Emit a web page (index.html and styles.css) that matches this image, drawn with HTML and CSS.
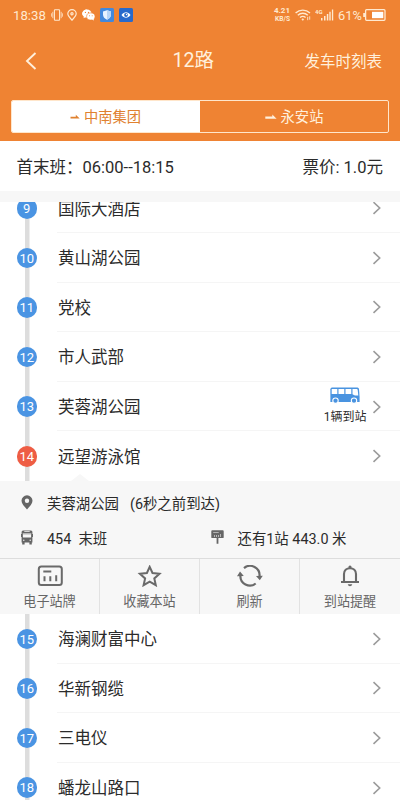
FILE: index.html
```
<!DOCTYPE html>
<html lang="zh-CN">
<head>
<meta charset="utf-8">
<title>12路</title>
<link rel="stylesheet" href="styles.css">
</head>
<body>
<svg class="defs" width="0" height="0">
  <symbol id="chev" viewBox="0 0 10 14"><path d="M1.5 1.2 7.7 7 1.5 12.8" fill="none" stroke="#9b9b9b" stroke-width="1.6"/></symbol>
</svg>
<div class="app">
  <header class="top">
    <div class="status">
      <span class="clock">18:38</span>
      <svg class="s-vib" width="12" height="12" viewBox="0 0 12 12" fill="none" stroke="#ffe9cf" stroke-width="1.1"><rect x="3.4" y=".8" width="5.2" height="10.4" rx=".7"/><path d="M1.8 2.8v6.4M10.2 2.8v6.4M.4 4.3v3.4M11.6 4.3v3.4" stroke-width=".8"/></svg>
      <svg class="s-pin" width="10" height="12" viewBox="0 0 10 12" fill="none" stroke="#ffe9cf" stroke-width="1.2"><path d="M5 11.2C2.6 8.6.8 6.7.8 4.8a4.2 4.2 0 0 1 8.4 0C9.2 6.700 7.400 8.600 5 11.200z"/><circle cx="5" cy="4.800" r="1.100"/></svg>
      <svg class="s-chat" width="13" height="12" viewBox="0 0 13 12"><path d="M5 .5C2.200.500.200 2.200.200 4.500c0 1.300.700 2.400 1.700 3.100L1.500 9.200l1.900-1 1.600.300z" fill="#fff"/><ellipse cx="5" cy="4.500" rx="4.600" ry="4" fill="#fff"/><ellipse cx="8.800" cy="7.500" rx="4.200" ry="3.600" fill="#fff" stroke="#ef8333" stroke-width=".6"/><path d="m10 10.500 1.900 1.100-.400-2z" fill="#fff"/><g fill="#ef8333"><circle cx="3.400" cy="3.400" r=".600"/><circle cx="6.500" cy="3.400" r=".600"/><circle cx="7.500" cy="6.700" r=".500"/><circle cx="10.200" cy="6.700" r=".500"/></g></svg>
      <svg class="s-shield" width="14" height="14" viewBox="0 0 14 14"><rect width="14" height="14" rx="1.500" fill="#4288dc"/><path d="M7 2.300 11 3.600v3.200c0 2.300-1.700 4-4 5-2.300-1-4-2.700-4-5V3.600z" fill="#e8f3ff"/><path d="M7 2.300 11 3.600v3.200c0 2.300-1.700 4-4 5z" fill="#b7d5f7"/></svg>
      <svg class="s-eye" width="14" height="14" viewBox="0 0 14 14"><rect width="14" height="14" rx="1.500" fill="#2869cc"/><path d="M2.500 7c2.500-3.700 6.500-3.700 9 0-2.500 3.700-6.500 3.700-9 0z" fill="#fff"/><circle cx="7" cy="7" r="1.900" fill="#2869cc"/><circle cx="7.500" cy="6.500" r=".7" fill="#fff"/></svg>
      <span class="speed"><b>4.21</b><b>KB/S</b></span>
      <svg class="s-wifi" width="16" height="12" viewBox="0 0 16 12" fill="none" stroke="#ffe9cf" stroke-width="1.400"><path d="M.6 4C4.700.100 10.900.100 15 4M2.800 6.300c2.900-2.700 7.100-2.700 10 0M5 8.600c1.700-1.500 3.900-1.500 5.600 0"/><circle cx="7.800" cy="10.500" r=".8" fill="#ffe9cf" stroke-width=".6"/><path d="M12.700 7.800v3.400M14.700 7.300v3.400" stroke-width=".9"/></svg>
      <svg class="s-sig" width="19" height="12" viewBox="0 0 19 12"><text x="0" y="5.300" class="g4">4G</text><g fill="#ffe9cf"><path d="M6 9h1.500v2.500H6zM9 7h1.500v4.500H9zM11.800 5h1.500v6.500h-1.500zM14.300 2.800h1.400v8.700h-1.400zM16.900.5h1.300v11h-1.300z"/></g></svg>
      <span class="pct">61%</span>
      <svg class="s-bat" width="23" height="12" viewBox="0 0 23 12"><rect x="2.600" y=".700" width="19.400" height="10.600" rx="1" fill="none" stroke="#ffe9cf" stroke-width="1.300"/><path d="M.2 4h1.800v4H.2z" fill="#ffe9cf"/><path d="M9 2.800h11.300v6.400H9z" fill="#fff"/></svg>
    </div>
    <div class="nav">
      <svg class="back" width="12" height="18" viewBox="0 0 12 18"><path d="M10.500 1 2 9l8.500 8" fill="none" stroke="#ffefdb" stroke-width="1.900"/></svg>
      <h1>12路</h1>
      <a class="sched">发车时刻表</a>
    </div>
    <div class="tabs">
      <div class="tab on"><svg width="10" height="6" viewBox="0 0 10 6"><path d="M.5 2.700h5.300V.7L9.700 4.400H.5z" fill="currentColor"/></svg><span>中南集团</span></div>
      <div class="tab"><svg width="12" height="6" viewBox="0 0 12 6"><path d="M.3 2.500h7V.4l4.300 4.300H.3z" fill="currentColor"/></svg><span>永安站</span></div>
    </div>
  </header>
  <div class="info"><span>首末班：06:00--18:15</span><span>票价: 1.0元</span></div>
  <main class="stops">
    <ul class="list before">
      <li><i>9</i><span>国际大酒店</span><svg class="chev"><use href="#chev"/></svg></li>
      <li><i>10</i><span>黄山湖公园</span><svg class="chev"><use href="#chev"/></svg></li>
      <li><i>11</i><span>党校</span><svg class="chev"><use href="#chev"/></svg></li>
      <li><i>12</i><span>市人武部</span><svg class="chev"><use href="#chev"/></svg></li>
      <li><i>13</i><span>芙蓉湖公园</span>
        <div class="bus">
          <svg width="30" height="17" viewBox="0 0 30 17"><path d="M2 .6h25.500q1.300 0 1.500 1.500l.6 7.900v5H.4V2.200Q.4.600 2 .6z" fill="#4993e0"/><path d="M1.700 2h5.600v5H1.700zM8.500 2h5.800v5H8.500zM15.500 2h5.800v5h-5.800zM22.500 2h4.300q.8 0 .9 1l.6 5.500h-3.300l-2.500-1.200z" fill="#fff"/><g fill="#4993e0" stroke="#fff" stroke-width="1.100"><circle cx="5.500" cy="13.700" r="2.700"/><circle cx="24" cy="13.700" r="2.700"/></g></svg>
          <em>1辆到站</em>
        </div>
        <svg class="chev"><use href="#chev"/></svg></li>
      <li class="cur"><i>14</i><span>远望游泳馆</span><svg class="chev"><use href="#chev"/></svg></li>
    </ul>
    <section class="panel">
      <div class="line">
        <svg width="12" height="15" viewBox="0 0 12 15"><path d="M6 14.500C3 11 .5 8.700.5 5.800a5.500 5.500 0 0 1 11 0C11.500 8.700 9 11 6 14.500z" fill="#666"/><circle cx="6" cy="5.700" r="2.200" fill="#f7f7f7"/></svg>
        <span class="a">芙蓉湖公园</span><span>(6秒之前到达)</span>
      </div>
      <div class="line two">
        <div class="half"><svg width="12" height="15" viewBox="0 0 12 15"><path d="M2 .4h8q1.400 0 1.400 1.500v10.600H.6V1.900Q.6.400 2 .4zM1.200 12.500h2.400v2H1.200zM8.400 12.500h2.400v2H8.400zM0 4h1v3H0zM11 4h1v3h-1z" fill="#666"/><path d="M1.900 3h8.200v4.500H1.900zM3.300 1.300h5.400v.7H3.300z" fill="#f7f7f7"/><path d="M1.900 3h8.200v1.500H1.900z" fill="#b5b5b5"/><circle cx="2.800" cy="10.300" r=".7" fill="#f7f7f7"/><circle cx="9.200" cy="10.300" r=".7" fill="#f7f7f7"/></svg><span>454&nbsp; 末班</span></div>
        <div class="half r"><svg width="13" height="14" viewBox="0 0 13 14"><path d="M1.200.3h10.600q.9 0 .9.900v6q0 .9-.9.900H7.400v5.600H5.600V8.100H1.200Q.3 8.100.3 7.200v-6Q.3.300 1.200.3z" fill="#666"/><path d="M2.200 2h5.500v.8H2.200zM3 5h.8v2H3zM5 5h.8v2H5zM7 5h.8v2H7zM9 4h.8v3H9z" fill="#ccc"/></svg><span>还有1站 443.0 米</span></div>
      </div>
      <div class="acts">
        <div><svg width="26" height="22" viewBox="0 0 26 22"><rect x="1.800" y="1.600" width="23" height="18.500" rx="2.500" fill="none" stroke="#6a6a6a" stroke-width="2"/><path d="M6.300 6.500h8M7.500 11.200v5M13.300 11.200v5M19.200 10.200v6" stroke="#6a6a6a" stroke-width="2"/></svg><span>电子站牌</span></div>
        <div><svg width="26" height="22" viewBox="0 0 26 22"><path d="m12.700 1.800 2.800 6.200 7 .7-5.200 4.700 1.500 6.800-6.100-3.600-6.100 3.600 1.500-6.800L2.900 8.700l7-.7z" fill="none" stroke="#6a6a6a" stroke-width="2"/></svg><span>收藏本站</span></div>
        <div><svg width="26" height="22" viewBox="0 0 26 22"><path d="M7 3.100A9.500 9.500 0 0 1 22.500 11.500M18.700 18.500A9.500 9.500 0 0 1 3.400 10.500" fill="none" stroke="#6a6a6a" stroke-width="2.200"/><path d="m19 11 6.800-.3-3 4.600zM0 11.300l3-4.700 3.800 4.400z" fill="#6a6a6a"/></svg><span>刷新</span></div>
        <div><svg width="26" height="22" viewBox="0 0 26 22"><path d="M7 16.500V9c0-3.400 2.500-5.800 6-5.800S19 5.600 19 9v7.500M4 17h18" fill="none" stroke="#6a6a6a" stroke-width="2.100"/><path d="M11.500 1.500q1.500-1.800 3 0V3h-3zM10.700 19.200h4.600q-.5 2-2.300 2t-2.300-2z" fill="#6a6a6a"/></svg><span>到站提醒</span></div>
      </div>
    </section>
    <ul class="list">
      <li><i>15</i><span>海澜财富中心</span><svg class="chev"><use href="#chev"/></svg></li>
      <li><i>16</i><span>华新钢缆</span><svg class="chev"><use href="#chev"/></svg></li>
      <li><i>17</i><span>三电仪</span><svg class="chev"><use href="#chev"/></svg></li>
      <li><i>18</i><span>蟠龙山路口</span><svg class="chev"><use href="#chev"/></svg></li>
    </ul>
  </main>
</div>
</body>
</html>
```
FILE: styles.css
```
* { box-sizing: border-box; }
body { margin: 0; font-family: Roboto, "Noto Sans CJK SC", sans-serif; font-weight: 400; color: #2b2b2b; background: #fff; }
svg { display: block; flex: none; }
.defs { position: absolute; }
.app { width: 400px; height: 800px; overflow: hidden; display: flex; flex-direction: column; }
.top { height: 141px; background: #ef8333; flex: none; color: #fff0dc; }
.status { height: 30px; display: flex; align-items: center; padding-left: 13px; white-space: nowrap; }
.clock { font-size: 13.2px; width: 38px; color: #ffe9cf; }
.s-pin { margin-left: 4px; }
.s-chat { margin-left: 5px; }
.s-shield, .s-eye { margin-left: 5px; }
.speed { display: flex; flex-direction: column; align-items: flex-end; margin-left: auto; color: #ffe9cf; font-size: 6.6px; line-height: 8px; }
.speed b:first-child { font-size: 8px; line-height: 8px; }
.speed b:last-child { line-height: 8px; }
.s-wifi { margin-left: 5px; }
.s-sig { margin-left: 4px; }
.g4 { font: bold 6px Roboto, sans-serif; fill: #ffe9cf; }
.pct { font-size: 12.8px; width: 25px; margin-left: 4px; color: #ffe9cf; }
.s-bat { margin-right: 14px; }
.nav { height: 62px; display: grid; grid-template-columns: 147.5px auto 1fr; align-items: center; padding: 0 18px 0 25px; }
h1 { margin: 0; font-size: 19.6px; line-height: 30px; font-weight: 400; }
.sched { font-size: 15.5px; justify-self: end; padding-bottom: 2px; }
.tabs { margin: 8px 11px 0; height: 33px; display: flex; border: 1px solid #ffe6cb; border-radius: 2px; overflow: hidden; }
.tab { flex: 0 0 50%; display: flex; align-items: center; justify-content: center; gap: 4px; font-size: 14.3px; line-height: 31px; }
.tab span { padding-top: 2px; }
.tab.on { background: #fff; color: #e0812f; padding-right: 1px; }
.info { height: 50px; flex: none; display: flex; justify-content: space-between; align-items: center; padding: 0 17px 0 16.5px; font-size: 16.5px; }
.stops { flex: 1; min-height: 0; overflow: hidden; border-top: 11px solid #f7f7f7; }
.list { list-style: none; margin: 0; padding: 0; background: linear-gradient(#ddd, #ddd) 24.5px 0 / 4.5px 100% no-repeat; }
.before { margin-top: -18.5px; }
.list li { height: 49.6px; display: flex; align-items: center; padding: 0 18px 0 16.5px; background: linear-gradient(#f5f5f5, #f5f5f5) 57px 100% / 343px 1px no-repeat; }
.list li:last-child { background: none; }
.list i { width: 20.5px; height: 20.5px; border-radius: 50%; background: #4a94e3; color: #fff; font-style: normal; font-size: 13px; line-height: 21px; text-align: center; margin-right: 21px; }
.list .cur i { background: #ee5d44; }
.list span { font-size: 16.5px; line-height: 24px; flex: 1; padding-top: 2.6px; }
.chev { width: 10px; height: 14px; }
.bus { display: flex; flex-direction: column; align-items: center; margin-right: 5.5px; }
.bus svg { margin-right: 1px; }
.bus em { font-style: normal; font-size: 12px; line-height: 17px; margin-top: 5px; }
.panel { height: 133px; background: #f7f7f7; position: relative; padding-top: 9px; }
.panel::before { content: ""; position: absolute; left: 71px; top: -7px; border: solid transparent; border-width: 0 9px 7px; border-bottom-color: #f7f7f7; }
.line { height: 24px; display: flex; align-items: center; padding-left: 21px; font-size: 14.4px; }
.line svg { margin-right: 14px; }
.line .a { margin-right: 11px; }
.two { margin-top: 11px; }
.half { display: flex; align-items: center; width: 190px; }
.acts { margin-top: 9px; height: 56px; border-top: 1px solid #ddd; display: grid; grid-template-columns: repeat(4, 1fr); }
.acts div { display: flex; flex-direction: column; align-items: center; padding-top: 6px; border-right: 1px solid #e2e2e2; font-size: 13.1px; line-height: 20px; color: #666; }
.acts div:last-child { border: 0; }
.acts span { margin-top: 5px; }
```
